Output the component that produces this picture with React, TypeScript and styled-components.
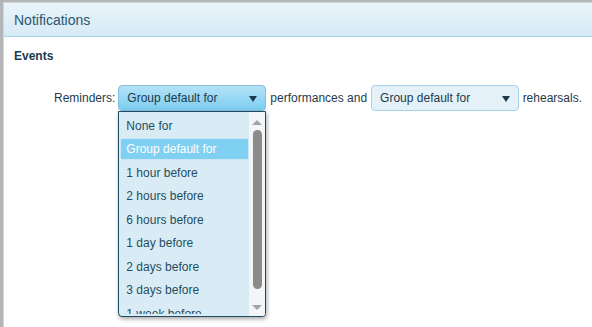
import React from "react";
import styled, { createGlobalStyle } from "styled-components";

const GlobalStyle = createGlobalStyle`
  html, body {
    margin: 0;
    padding: 0;
    height: 100%;
    overflow: hidden;
  }
  body {
    background: #b3b6b9;
    font-family: "Liberation Sans", Arial, sans-serif;
    font-size: 12px;
    color: #1f3a4b;
  }
`;

const options = [
  "None for",
  "Group default for",
  "1 hour before",
  "2 hours before",
  "6 hours before",
  "1 day before",
  "2 days before",
  "3 days before",
  "1 week before",
];

export default function App() {
  return (
    <>
      <GlobalStyle />
      <Dialog>
        <Header>Notifications</Header>
        <Body>
          <SectionTitle>Events</SectionTitle>
          <Row>
            <Label>Reminders:</Label>
            <SelectWrap>
              <Select open>
                <span>Group default for</span>
                <Arrow />
              </Select>
              <DropList>
                <Options>
                  {options.map((o) => (
                    <Option key={o} selected={o === "Group default for"}>
                      {o}
                    </Option>
                  ))}
                </Options>
                <ScrollBar>
                  <ScrollArrow up />
                  <Thumb />
                  <ScrollArrow />
                </ScrollBar>
              </DropList>
            </SelectWrap>
            <Label>performances and</Label>
            <Select>
              <span>Group default for</span>
              <Arrow />
            </Select>
            <Label>rehearsals.</Label>
          </Row>
        </Body>
      </Dialog>
    </>
  );
}

const Dialog = styled.div`
  margin: 2px 0 0 3px;
  height: 400px;
  background: #fff;
  border-top: 1px solid #d4d6d8;
  border-left: 1px solid #d4d6d8;
`;

const Header = styled.div`
  height: 33px;
  padding-left: 10px;
  display: flex;
  align-items: center;
  font-size: 14px;
  color: #2b566d;
  background: linear-gradient(#e9f4fa, #d6eaf5);
  border-bottom: 1px solid #a3d3ea;
`;

const Body = styled.div`
  padding: 11px 10px 12px;
`;

const SectionTitle = styled.div`
  font-weight: bold;
  font-size: 12px;
  color: #1c3a4d;
  height: 16px;
  line-height: 16px;
`;

const Row = styled.div`
  display: flex;
  align-items: center;
  gap: 4px;
  margin-top: 21px;
  padding-left: 40px;
  height: 26px;
`;

const Label = styled.span`
  white-space: nowrap;
  color: #1f3a4b;
`;

const SelectWrap = styled.div`
  position: relative;
  margin-left: -1px;
`;

const Select = styled.div<{ open?: boolean }>`
  box-sizing: border-box;
  width: 148px;
  height: 26px;
  padding: 0 8px 0 8px;
  display: flex;
  align-items: center;
  justify-content: space-between;
  border-radius: 4px;
  color: #1c3a4d;
  border: 1px solid ${(p) => (p.open ? "#86bfdc" : "#a7d2e8")};
  background: ${(p) =>
    p.open ? "linear-gradient(#b4e2f7, #7ccdf0)" : "#e4f1f9"};
`;

const Arrow = styled.span`
  width: 0;
  height: 0;
  margin-top: 2px;
  border-left: 4.5px solid transparent;
  border-right: 4.5px solid transparent;
  border-top: 6px solid #1c3a4d;
`;

const DropList = styled.div`
  position: absolute;
  top: 26px;
  left: 0;
  box-sizing: border-box;
  width: 148px;
  height: 206px;
  display: flex;
  background: #d9ecf5;
  border: 1px solid #1f4c63;
  border-radius: 0 0 4px 4px;
  box-shadow: 1px 2px 4px rgba(0, 0, 0, 0.35);
  overflow: hidden;
`;

const Options = styled.div`
  flex: 1;
  padding-top: 3.5px;
  margin-bottom: 2px;
  overflow: hidden;
`;

const Option = styled.div<{ selected?: boolean }>`
  height: 20px;
  line-height: 20px;
  margin: 0 1px 3.5px 2px;
  padding-left: 5px;
  border-radius: 2px;
  white-space: nowrap;
  color: ${(p) => (p.selected ? "#fff" : "#1f4c63")};
  background: ${(p) => (p.selected ? "#7fd0f1" : "transparent")};
  box-shadow: ${(p) => (p.selected ? "0 0 1px #5fb8e0" : "none")};
`;

const ScrollBar = styled.div`
  width: 16px;
  display: flex;
  flex-direction: column;
  align-items: center;
  background: #f2f6f8;
  padding: 8px 0 6px;
  box-sizing: border-box;
`;

const ScrollArrow = styled.span<{ up?: boolean }>`
  width: 0;
  height: 0;
  border-left: 5px solid transparent;
  border-right: 5px solid transparent;
  ${(p) =>
    p.up
      ? "border-bottom: 5px solid #a3a3a3;"
      : "border-top: 5px solid #a3a3a3;"}
`;

const Thumb = styled.div`
  flex: 1;
  width: 9px;
  margin: 5px 0 16px;
  border-radius: 5px;
  background: #8b8b8b;
`;
